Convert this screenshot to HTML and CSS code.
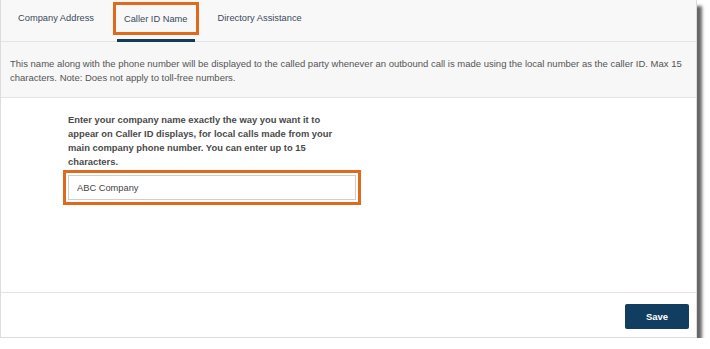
FILE: index.html
```html
<!DOCTYPE html>
<html lang="en">
<head>
    <meta charset="UTF-8">
    <title>Caller ID Name</title>
    <link rel="stylesheet" href="styles.css">
</head>
<body>

<div class="panel">
    <div class="tabs">
        <div class="tab"><span class="tab-label">Company Address</span></div>
        <div class="tab active"><span class="tab-label highlight">Caller ID Name</span></div>
        <div class="tab"><span class="tab-label">Directory Assistance</span></div>
    </div>

    <div class="notice">
        <p>This name along with the phone number will be displayed to the called party whenever an outbound call is made using the local number as the caller ID. Max 15 characters. Note: Does not apply to toll-free numbers.</p>
    </div>

    <div class="content">
        <label class="field-label" for="callerName">Enter your company name exactly the way you want it to appear on Caller ID displays, for local calls made from your main company phone number. You can enter up to 15 characters.</label>
        <input class="field-input highlight" type="text" id="callerName" value="ABC Company" maxlength="15">
    </div>

    <div class="footer">
        <button class="button">Save</button>
    </div>
</div>

</body>
</html>
```

FILE: styles.css
```css
* {
    margin: 0;
    padding: 0;
    box-sizing: border-box;
    font-family: "Liberation Sans", Arial, sans-serif;
}

body {
    background-color: #ffffff;
}

.panel {
    width: 697px;
    height: 338px;
    border: 1px solid #dcdcdc;
    border-top: none;
    background-color: #ffffff;
    box-shadow: 5px 6px 3px rgba(0, 0, 0, 0.6);
    display: flex;
    flex-direction: column;
}

.tabs {
    height: 42px;
    display: flex;
    gap: 16px;
    padding-left: 10px;
    background-color: #f8f8f8;
    border-bottom: 1px solid #e4e4e4;
}

.tab {
    display: flex;
    align-items: center;
    padding: 0 0 3px;
    border-bottom: 3px solid transparent;
    margin-bottom: -1px;
}

.tab.active {
    border-bottom-color: #123a5b;
}

.tab-label {
    display: block;
    padding: 8px 7px;
    font-size: 9.3px;
    color: #394958;
}

.tab-label.highlight {
    padding: 8px 7px 7px;
}

.highlight {
    outline: 3px solid #e0691c;
    outline-offset: 1px;
}

.notice {
    height: 56px;
    padding: 15px 9px 0;
    background-color: #f7f7f7;
    border-bottom: 1px solid #e4e4e4;
}

.notice p {
    font-size: 9.5px;
    line-height: 14px;
    color: #555555;
}

.content {
    flex: 1;
    padding: 15px 0 0 67px;
}

.field-label {
    display: block;
    width: 282px;
    font-size: 9.4px;
    line-height: 14px;
    font-weight: bold;
    color: #4a4a4a;
}

.field-input {
    display: block;
    width: 288px;
    height: 25px;
    margin-top: 6px;
    padding: 0 8px;
    border: 1px solid #cfcfcf;
    font-size: 9.3px;
    color: #444444;
    outline-offset: 2px;
}

.footer {
    height: 45px;
    border-top: 1px solid #e4e4e4;
    display: flex;
    justify-content: flex-end;
    align-items: flex-start;
    padding: 11px 7px 0 0;
}

.button {
    width: 64px;
    height: 25px;
    background-color: #113d60;
    color: #ffffff;
    border: none;
    border-radius: 2px;
    font-size: 9.5px;
    font-weight: bold;
}
```
